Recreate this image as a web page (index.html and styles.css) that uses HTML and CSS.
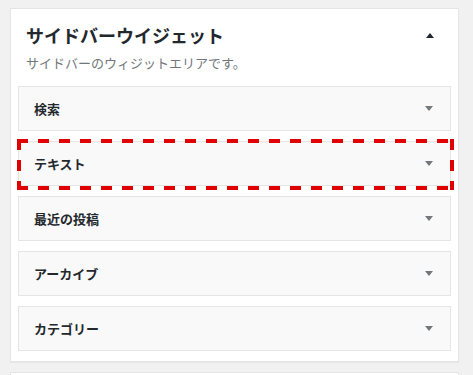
FILE: index.html
```html
<!DOCTYPE html>
<html lang="ja">
<head>
    <meta charset="UTF-8">
    <meta name="viewport" content="width=device-width, initial-scale=1.0">
    <title>サイドバーウイジェット</title>
    <link rel="stylesheet" href="styles.css">
</head>
<body>

<div class="sidebar-panel">
    <div class="panel-header">
        <h2 class="panel-title">サイドバーウイジェット</h2>
        <span class="arrow arrow-up"></span>
    </div>
    <p class="panel-desc">サイドバーのウィジットエリアです。</p>

    <div class="widget-list">
        <div class="widget">
            <span class="widget-title">検索</span>
            <span class="arrow arrow-down"></span>
        </div>
        <div class="widget highlight">
            <span class="widget-title">テキスト</span>
            <span class="arrow arrow-down"></span>
        </div>
        <div class="widget">
            <span class="widget-title">最近の投稿</span>
            <span class="arrow arrow-down"></span>
        </div>
        <div class="widget">
            <span class="widget-title">アーカイブ</span>
            <span class="arrow arrow-down"></span>
        </div>
        <div class="widget">
            <span class="widget-title">カテゴリー</span>
            <span class="arrow arrow-down"></span>
        </div>
    </div>
</div>

<div class="sidebar-panel next-panel"></div>

</body>
</html>
```

FILE: styles.css
```css
body {
    margin: 0;
    background-color: #f1f1f1;
    font-family: "Noto Sans CJK JP", "Noto Sans", sans-serif;
    color: #23282d;
}

.sidebar-panel {
    width: 433px;
    margin: 8px 0 0 10px;
    padding: 0 7px 10px;
    border: 1px solid #e5e5e5;
    background-color: #fff;
    box-shadow: 0 1px 1px rgba(0, 0, 0, 0.04);
}

.next-panel {
    height: 40px;
    margin-top: 10px;
}

.panel-header {
    display: flex;
    align-items: center;
    justify-content: space-between;
    padding: 14px 17px 0 8px;
}

.panel-title {
    margin: 0;
    font-size: 18px;
    font-weight: 700;
    line-height: 24px;
}

.panel-desc {
    margin: 6px 0 0 8px;
    font-size: 13px;
    line-height: 20px;
    color: #72777c;
}

.widget-list {
    display: flex;
    flex-direction: column;
    gap: 10px;
    margin-top: 13px;
}

.widget {
    position: relative;
    display: flex;
    align-items: center;
    justify-content: space-between;
    height: 43px;
    padding: 0 17px 0 15px;
    border: 1px solid #e5e5e5;
    background-color: #f9f9f9;
}

.widget-title {
    font-size: 13px;
    font-weight: 700;
    color: #23282d;
}

/* red dashed marker drawn over the selected widget */
.highlight::after {
    content: "";
    position: absolute;
    top: -3px;
    left: -2px;
    right: -4px;
    bottom: -5px;
    background:
        linear-gradient(to right, #e00000 11px, transparent 11px) left top / 21px 4px repeat-x,
        linear-gradient(to right, #e00000 11px, transparent 11px) left bottom / 21px 4px repeat-x,
        linear-gradient(to bottom, #e00000 11px, transparent 11px) left top / 4px 21px repeat-y,
        linear-gradient(to bottom, #e00000 11px, transparent 11px) right top / 4px 21px repeat-y;
    pointer-events: none;
}

.arrow {
    width: 0;
    height: 0;
    border-left: 4px solid transparent;
    border-right: 4px solid transparent;
}

.arrow-up {
    border-bottom: 5px solid #23282d;
}

.arrow-down {
    border-top: 5px solid #72777c;
}
```
